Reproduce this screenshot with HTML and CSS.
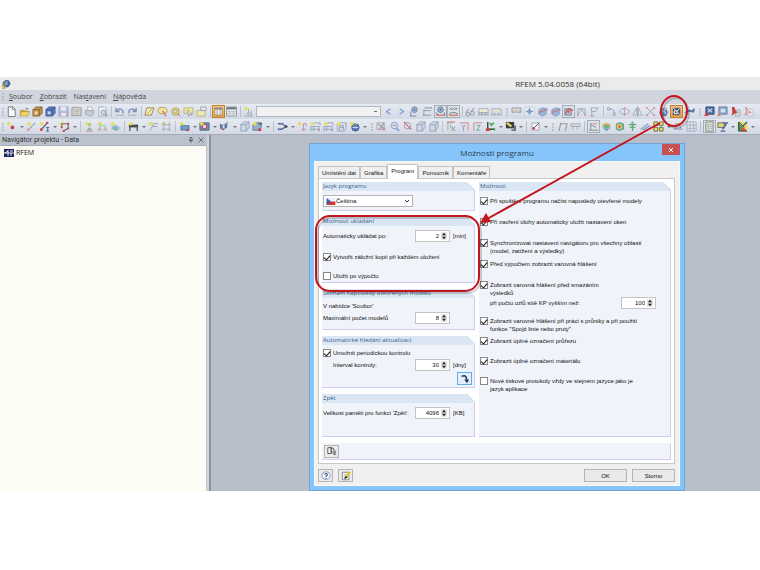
FILE: index.html
```html
<!DOCTYPE html>
<html lang="cs">
<head>
  <meta charset="UTF-8" />
  <meta name="viewport" content="width=device-width, initial-scale=1.0"/>
  <title>RFEM 5.04.0058 (64bit)</title>
  <link rel="stylesheet" href="styles.css">
</head>
<body>
  <div class="app">
    <header class="title-bar">
      <svg class="app-icon" viewBox="0 0 12 12">
        <path d="M2 4L6 1l4 1 1.500 4-3 4H6L3 8z" fill="#3d5f8c"/>
        <path d="M4 4l3-2 2 2-1 3-3 1z" fill="#7e9dc4"/>
        <path d="M4.500 6H2v2.500h2.500V11H1.500" fill="none" stroke="#b8a045" stroke-width="1.500"/>
      </svg>
      <h1>RFEM 5.04.0058 (64bit)</h1>
    </header>
    <nav class="menu-bar">
      <span class="grip"></span>
      <a href="#"><u>S</u>oubor</a>
      <a href="#"><u>Z</u>obrazit</a>
      <a href="#">Nas<u>t</u>avení</a>
      <a href="#"><u>N</u>ápověda</a>
    </nav>
    <div class="toolbar toolbar-main" id="toolbar-main"></div>
    <div class="toolbar" id="toolbar-model"></div>

    <div class="main">
      <aside class="navigator">
        <div class="navigator-header">
          <h2>Navigátor projektu - Data</h2>
          <button title="Připnout"><svg viewBox="0 0 6 6"><path d="M2 .5h2v3H2zM1 3.500h4M3 3.500V6" fill="none" stroke="#555" stroke-width=".8"/></svg></button>
          <button title="Zavřít"><svg viewBox="0 0 6 6"><path d="M.5.5l5 5M5.500.5l-5 5" stroke="#666" stroke-width=".9"/></svg></button>
        </div>
        <ul class="tree">
          <li>
            <svg viewBox="0 0 10 8"><path d="M0 0h10v8H0z" fill="#1d2462"/><path d="M0 4h10M4 1v6M4 2L1 4M7 4v3M6 2h3" stroke="#fff" stroke-width=".9"/></svg>
            RFEM
          </li>
        </ul>
      </aside>

      <main class="workspace">
        <section class="dialog">
          <div class="dialog-title">
            <h2>Možnosti programu</h2>
            <button class="close-button" title="Zavřít"><svg viewBox="0 0 6 6"><path d="M1 1l4 4M5 1L1 5" stroke="#fff"/></svg></button>
          </div>
          <div class="dialog-body">
            <div class="tabs">
              <button class="tab">Umístění dat</button>
              <button class="tab">Grafika</button>
              <button class="tab active">Program</button>
              <button class="tab">Pomocník</button>
              <button class="tab">Komentáře</button>
            </div>
            <div class="tab-panel">
              <div class="column">
                <section class="group group-language">
                  <h3>Jazyk programu</h3>
                  <div class="language">
                    <svg class="flag" viewBox="0 0 10 8"><path d="M0 0h10v4H0z" fill="#eef"/><path d="M0 4h10v4H0z" fill="#d8392f"/><path d="M0 0l5 4-5 4z" fill="#2d62b4"/></svg>
                    <select aria-label="Jazyk programu"><option>Čeština</option></select>
                    <svg class="chevron" viewBox="0 0 6 6"><path d="M1 2l2 2 2-2" fill="none" stroke="#333"/></svg>
                  </div>
                </section>

                <section class="group group-saving">
                  <h3>Možnosti ukládání</h3>
                  <div class="field">
                    <label for="autosave">Automaticky ukládat po:</label>
                    <span class="spin"><input type="number" id="autosave" value="2"><svg viewBox="0 0 8 10"><use href="#arrows"/></svg></span>
                    <span class="unit">[min]</span>
                  </div>
                  <label class="check"><input type="checkbox" checked>Vytvořit záložní kopii při každém uložení</label>
                  <label class="check"><input type="checkbox">Uložit po výpočtu</label>
                </section>

                <section class="group group-recent">
                  <h3>Seznam naposledy otevřených modelů</h3>
                  <p>V nabídce 'Soubor'</p>
                  <div class="field">
                    <label for="recent">Maximální počet modelů</label>
                    <span class="spin"><input type="number" id="recent" value="8"><svg viewBox="0 0 8 10"><use href="#arrows"/></svg></span>
                    <span class="unit"></span>
                  </div>
                </section>

                <section class="group group-updates">
                  <h3>Automatické hledání aktualizací</h3>
                  <label class="check"><input type="checkbox" checked>Umožnit periodickou kontrolu</label>
                  <div class="field indented">
                    <label for="interval">Interval kontroly:</label>
                    <span class="spin"><input type="number" id="interval" value="30"><svg viewBox="0 0 8 10"><use href="#arrows"/></svg></span>
                    <span class="unit">[dny]</span>
                  </div>
                  <button class="icon-button focused" title="Zkontrolovat nyní">
                    <svg viewBox="0 0 12 12"><path d="M2 3c3-2 6-1 6 4" fill="none" stroke="#26335e" stroke-width="1.800"/><path d="M5 6.500h6L8.500 11z" fill="#26335e"/></svg>
                  </button>
                </section>

                <section class="group group-undo">
                  <h3>Zpět</h3>
                  <div class="field">
                    <label for="undo">Velikost paměti pro funkci 'Zpět':</label>
                    <span class="spin"><input type="number" id="undo" value="4096"><svg viewBox="0 0 8 10"><use href="#arrows"/></svg></span>
                    <span class="unit">[KB]</span>
                  </div>
                </section>
              </div>

              <section class="group group-options">
                <h3>Možnosti</h3>
                <div class="check-list">
                  <label class="check"><input type="checkbox" checked>Při spuštění programu načíst naposledy otevřené modely</label>
                  <label class="check"><input type="checkbox" checked>Při zavření úlohy automaticky uložit nastavení oken</label>
                  <label class="check"><input type="checkbox" checked><span>Synchronizovat nastavení navigátoru pro všechny oblasti<br>(model, zatížení a výsledky)</span></label>
                  <label class="check"><input type="checkbox" checked>Před výpočtem zobrazit varovná hlášení</label>
                  <label class="check"><input type="checkbox" checked><span>Zobrazit varovná hlášení před smazáním<br>výsledků</span></label>
                </div>
                <div class="field node-count">
                  <label for="nodes">při počtu uzlů sítě KP vyšším než:</label>
                  <span class="spin"><input type="number" id="nodes" value="100"><svg viewBox="0 0 8 10"><use href="#arrows"/></svg></span>
                </div>
                <div class="check-list">
                  <label class="check"><input type="checkbox" checked><span>Zobrazit varovné hlášení při práci s průniky a při použití<br>funkce "Spojit linie nebo pruty"</span></label>
                  <label class="check"><input type="checkbox" checked>Zobrazit úplné označení průřezu</label>
                  <label class="check"><input type="checkbox" checked>Zobrazit úplné označení materiálu</label>
                  <label class="check"><input type="checkbox"><span>Nové tiskové protokoly vždy ve stejném jazyce jako je<br>jazyk aplikace</span></label>
                </div>
              </section>

              <div class="panel-footer">
                <button class="icon-button" title="Výchozí nastavení">
                  <svg viewBox="0 0 12 12"><path d="M1 2h4v7H1zM5 2l3 1v5L5 7z" fill="#fff" stroke="#544" stroke-width="1.100"/><path d="M7 5h4v6H7z" fill="#aaa"/><path d="M8 7h2M8 9.500h2" stroke="#444"/></svg>
                </button>
              </div>
            </div>

            <div class="dialog-buttons">
              <button class="icon-button" title="Nápověda">
                <svg viewBox="0 0 12 12"><ellipse cx="6" cy="5.500" rx="5" ry="4.500" fill="#f4f7fc" stroke="#7d8ca6"/><path d="M4.500 4.500c0-2 3.300-2 3 0C7.400 5.600 6 5.500 6 7M6 8v1.200" fill="none" stroke="#2a4490" stroke-width="1.300"/></svg>
              </button>
              <button class="icon-button" title="Upravit komentář">
                <svg viewBox="0 0 12 12"><path d="M1.500 1.500h8v9h-8z" fill="#fff" stroke="#777"/><path d="M3 4h4M3 6h2M3 8h5" stroke="#888" stroke-width=".7"/><path d="M11 1L6 7" stroke="#e3c21c" stroke-width="2.600"/><path d="M6 6L4.500 9l3-1.500" stroke="#222" fill="#222"/></svg>
              </button>
              <button class="text-button first">OK</button>
              <button class="text-button">Storno</button>
            </div>
          </div>
        </section>
      </main>
    </div>

    <svg class="annotation" viewBox="0 0 760 414">
      <g class="shadow">
        <rect x="318" y="141" width="163" height="75" rx="14"/>
        <ellipse cx="676" cy="36" rx="13" ry="15"/>
      </g>
      <g class="marks">
        <rect x="316" y="139" width="163" height="75" rx="14"/>
        <ellipse cx="674" cy="34" rx="13" ry="15"/>
        <path d="M660 46L487 142"/>
      </g>
      <path d="M480 146l6-10 5 9z" fill="#c4141c"/>
    </svg>
  </div>

  <svg width="0" height="0" class="defs">
    <symbol id="arrows" viewBox="0 0 8 10">
      <path d="M0 0h8v10H0z" fill="#e6e6e6"/>
      <path d="M0 5h8" stroke="#bbb" stroke-width=".6"/>
      <path d="M1.500 4L4 1l2.500 3zM1.500 6L4 9l2.500-3z" fill="#222"/>
    </symbol>
  </svg>
  <script src="toolbar.js"></script>
</body>
</html>
```

FILE: toolbar.js
```js
// Icon drawings, all on a 12 x 12 grid
const star = '<circle cx="3" cy="3" r="2" fill="#e8dc3c"/>';
const icons = {
  new: '<path d="M2.500 1h5l2.500 2.500V11.500h-7.500z" fill="#fff" stroke="#555" stroke-width=".9"/><path d="M7 1v3h3" fill="none" stroke="#555" stroke-width=".8"/>',
  open: '<path d="M1 4h4l1 1h4v5H1z" fill="#c79a22"/><path d="M3 6h9l-2.500 5H1z" fill="#f0cf55" stroke="#9b7a1c" stroke-width=".5"/><path d="M7 3q2-2 3 1" fill="none" stroke="#44618f"/>',
  boxOrange: '<path d="M1 4l3-3h7v7l-3 3H1z" fill="#c98428" stroke="#5e421d" stroke-width=".8"/><path d="M1 4h7v7M8 4l3-3" stroke="#5e421d" fill="none" stroke-width=".8"/><path d="M3 6h3v3H3z" fill="#f2dfb5"/>',
  boxBlue: '<path d="M1 4l3-3h7v7l-3 3H1z" fill="#3f6fc0" stroke="#1c2f63" stroke-width=".8"/><path d="M1 4h7v7M8 4l3-3" stroke="#1c2f63" fill="none" stroke-width=".8"/><path d="M3 6h3v3H3z" fill="#c4d6f3"/>',
  save: '<path d="M1 1h10v10H1z" fill="#b3b7d5" stroke="#8a8fb2" stroke-width=".8"/><path d="M3 1h6v4H3zM3.500 7.500h5V11h-5z" fill="#eceef5"/>',
  sheet: '<path d="M1 1.500h10v9H1z" fill="#d9d6ce" stroke="#8e8b86"/><path d="M1 4h10M3 6h6M3 8h6" stroke="#99958e" stroke-width=".7"/>',
  print: '<path d="M4 1h4l2 4H4z" fill="#f8f8fa" stroke="#8f96a5" stroke-width=".7"/><path d="M1.500 5h9v4l-3 2-6-2z" fill="#c3c8d2" stroke="#828a99" stroke-width=".7"/>',
  preview: '<path d="M2 1h6l2 2v8H2z" fill="#f0f2f7" stroke="#8d95a6" stroke-width=".8"/><circle cx="7" cy="7" r="2.500" fill="#cdd9ec" stroke="#8090ab"/><path d="M9 9l2.500 2" stroke="#8090ab" stroke-width="1.300"/>',
  undo: '<path d="M2 2v4h4M2.500 5.500C6 1.500 11 3.500 9.500 8" fill="none" stroke="#6d83aa" stroke-width="1.400"/><path d="M2 10h9" stroke="#9ba6b9"/>',
  redo: '<path d="M10 2v4H6M9.500 5.500C6 1.500 1 3.500 2.500 8" fill="none" stroke="#6d83aa" stroke-width="1.400"/><path d="M1 10h9" stroke="#9ba6b9"/>',
  plane: '<path d="M3 2h8l-3 8H1z" fill="#f3eeb5" stroke="#94652b" stroke-width=".9"/><path d="M3 9l6-6" stroke="#c58c2b"/>',
  lens: '<ellipse cx="6" cy="5" rx="5" ry="3.500" fill="#f2e692" stroke="#a98c35"/><path d="M6 5l4 6" stroke="#c35a4c" stroke-width="1.200"/>',
  target: '<circle cx="6" cy="6" r="4" fill="#f3dc66" stroke="#9b8540"/><circle cx="6" cy="6" r="1.500" fill="#fff" stroke="#776"/><path d="M9 9l2 2" stroke="#c33"/>',
  select: '<path d="M1 2h10v6H1z" fill="#f0e88c" stroke="#a4a06d" stroke-width=".8"/><path d="M5 4l5 6-3-1-1 2z" fill="#f7f8fb" stroke="#777" stroke-width=".7"/>',
  folder: '<path d="M1 5h9v6H1z" fill="#f1eaa7" stroke="#a79f5c" stroke-width=".8"/><path d="M5 1h6v4H5z" fill="#dfe5ef" stroke="#7d8ba1" stroke-width=".8"/>',
  columns: '<path d="M1 1h10v10H1z" fill="#f2f3f5" stroke="#777"/><path d="M1 2.500h10" stroke="#555" stroke-width="1.500"/><path d="M4 3v8M8 3v8" stroke="#888"/>',
  table: '<path d="M.5 1h11v10H.5z" fill="#e1e4e8" stroke="#777" stroke-width=".8"/><path d="M1 2.500h10" stroke="#4a5568" stroke-width="2"/><path d="M1 6h10M1 8.500h10M4 4v7M8 4v7" stroke="#b2b7bf" stroke-width=".7"/>',
  load: star + '<path d="M6 3v5M4 7l2 3 2-3M1 11h10M9 5v6" fill="none" stroke="#8b97ad" stroke-width=".9"/>',
  left: '<path d="M8 3L4 6l4 3" fill="none" stroke="#6f93d6" stroke-width="1.500"/>',
  right: '<path d="M4 3l4 3-4 3" fill="none" stroke="#6f93d6" stroke-width="1.500"/>',
  eye: '<circle cx="6" cy="4" r="3" fill="#a5bddf" stroke="#4d6388"/><circle cx="6" cy="4" r="1" fill="#253f70"/><path d="M2 6v5M1 11h7" stroke="#778"/>',
  values: '<path d="M3 1l2 2M5 1L3 3M6 1l2 2M8 1L6 3M9 1l2 2M11 1L9 3M2 4v7M1 10h9M2 5h8" stroke="#6a7386" fill="none" stroke-width=".8"/>',
  eyeRed: '<circle cx="6" cy="4" r="3" fill="#a5bddf" stroke="#3d5c8e"/><circle cx="6" cy="4" r="1" fill="#253f70"/><path d="M1 10h10" stroke="#d0493f" stroke-width="1.200"/><path d="M1 7l3 3M10 7l1 3" stroke="#456"/>',
  valuesRed: '<path d="M2 2l2 2M4 2L2 4M5 2l2 2M7 2L5 4M8 2l2 2M10 2L8 4" stroke="#555" stroke-width=".8"/><path d="M1 9q5-4 10 0" fill="none" stroke="#567"/><path d="M1 10h10" stroke="#d0493f" stroke-width="1.200"/>',
  glasses: '<path d="M1 9a2 2 0 104 0 2 2 0 10-4 0M6 8a2 2 0 104 0 2 2 0 10-4 0M1 8l3-5M6 7l4-5" fill="none" stroke="#8b94a5" stroke-width="1.100"/>',
  calc: '<path d="M1 3h10v4H1z" fill="#f6f2d3" stroke="#8790a1" stroke-width=".8"/><path d="M1 11V7M4 11V7M8 11V7M11 11V7M1 9h10" stroke="#7d899e" stroke-width=".8"/>',
  mesh: '<path d="M1 3h10M1 9h10M1 3v8M4 3v8M8 3v8M11 3v8" stroke="#9097a5" stroke-width=".8"/><path d="M2 4h8v3H2z" fill="#e9e4c3"/>',
  hatch: '<path d="M1 2h10v5H1z" fill="#b5b2a8" stroke="#8b8e96" stroke-width=".8"/><path d="M1 4h10M4 2v5M8 2v5M2 10l7-6" stroke="#e6e3d9" stroke-width=".8"/>',
  grid: '<path d="M1 1h10v10H1z" fill="#e6ecf5" stroke="#a4b3cc" stroke-width=".7" stroke-dasharray="1.500 1"/><path d="M6 2v8M2 6h8" stroke="#5579b5" stroke-width=".8"/><circle cx="6" cy="6" r="2" fill="none" stroke="#5579b5"/>',
  solid: '<path d="M2 4l4-2 5 1-1 6-4 2-4-2z" fill="#8dafd9" stroke="#6683ac" stroke-width=".7"/><path d="M2 7l8-3" stroke="#d3544b" stroke-width="1.200"/>',
  solidRed: '<path d="M2 3h7v7H2z" fill="#a8b8cf" stroke="#43628f" stroke-width=".8"/><path d="M2 9l4-6 5 2" fill="none" stroke="#c9433a" stroke-width="1.300"/><circle cx="6" cy="6" r="1.500" fill="#d45"/>',
  frameRed: '<path d="M2 10V3h8v7M2 10l4-7 4 7" fill="none" stroke="#8e96a6" stroke-width=".9"/><circle cx="2" cy="10" r="1" fill="#d88"/><circle cx="10" cy="10" r="1" fill="#d88"/>',
  support: '<path d="M2 2h8L7 6H3zM3 6v5M1 11h5" fill="none" stroke="#8893a8" stroke-width=".9"/>',
  copy: '<circle cx="3" cy="3" r="1.500" fill="none" stroke="#8a93a5"/><path d="M4 4q5-2 5 4" fill="none" stroke="#8a93a5"/><circle cx="9" cy="9" r="1.500" fill="none" stroke="#8a93a5"/>',
  rotate: '<ellipse cx="6" cy="6" rx="5" ry="3" fill="none" stroke="#7ea0cf"/><path d="M6 1v10" stroke="#d98480"/>',
  mirror: '<path d="M5 2v8H1zM7 2v8h4z" fill="#e9ecf2" stroke="#8690a3" stroke-width=".8"/><path d="M6 0v12" stroke="#8690a3" stroke-width=".6"/>',
  cross: '<path d="M2 2l8 8M10 2l-8 8" stroke="#8a8f9d" stroke-width=".9"/><path d="M1 1h2v2H1zM9 1h2v2H9zM1 9h2v2H1zM9 9h2v2H9z" fill="#dc8580"/>',
  globe: '<circle cx="6" cy="7" r="4" fill="#5d82b8" stroke="#2f4a76"/><circle cx="8" cy="3" r="2" fill="#9fb4d3"/><path d="M3 6q3-2 6 2" fill="none" stroke="#d9e4f3"/>',
  options: '<path d="M1 1h10v10H1z" fill="#2b457d"/><circle cx="5" cy="7" r="3" fill="#dfe6f3"/><circle cx="5" cy="7" r="1.200" fill="#27407a"/><path d="M7 5l3-3M8 8l2 2M2 2l2 1" stroke="#fff" fill="none" stroke-width="1.300"/>',
  wrench: '<path d="M1 8l4-3 5 1 1-3" fill="none" stroke="#46628f" stroke-width="2.200"/><circle cx="3" cy="8" r="2" fill="#8fa6c9"/>',
  screenBlue: '<path d="M2 1h9v8H2z" fill="#2d578f" stroke="#213d67"/><path d="M4 3l5 4M9 3L4 7" stroke="#cfe1f5" stroke-width="1.200"/><path d="M0 11l3-5 2 5z" fill="#cc2a25"/>',
  screenPale: '<path d="M2 1h9v8H2z" fill="#7f9cc4" stroke="#5f7799"/><path d="M4 3h5v4H4z" fill="#d4e1f0"/><path d="M0 11l3-4 1 4z" fill="#cf6d69"/>',
  pdf: '<path d="M6 4h5v7H6z" fill="#ced2da" stroke="#9297a3" stroke-width=".7"/><path d="M2 1h3q0 4 4 6-4 0-7 4 1-5 0-10z" fill="#c4211e"/>',
  pdfPale: '<path d="M5 3h4l2 2v6H5z" fill="#e8eaef" stroke="#a9aeb9" stroke-width=".7"/><path d="M3 1q1 5 6 6-4 0-7 3 3-4 1-9z" fill="#f3d3d2" stroke="#d8716d" stroke-width=".9"/>',
  node: star + '<circle cx="7" cy="7" r="2" fill="#cf2420"/>',
  line: star + '<path d="M2 10l8-8" stroke="#999" stroke-width="1.200"/><circle cx="2.500" cy="9.500" r="1.300" fill="#d98682"/>',
  lineRed: star + '<path d="M2 10l7-8" stroke="#444" stroke-width="1.400"/><circle cx="2.500" cy="9.500" r="1.500" fill="#cf2420"/><circle cx="9" cy="2" r="1.300" fill="#cf2420"/><path d="M8 7h3M9.500 7v4M8 11h3" stroke="#23418a"/>',
  polyline: star + '<path d="M3 3h7v5L5 11M3 3v4" fill="none" stroke="#555" stroke-width="1.200"/><path d="M9 2h2v2H9zM2 6h2v2H2zM9 7h2v2H9zM4 10h2v2H4z" fill="#cf2420"/>',
  person: star + '<circle cx="6" cy="4" r="2" fill="#a9c48f"/><path d="M3 10q3-6 6 0z" fill="#7fb295"/><path d="M2 11h8" stroke="#b77"/>',
  supports: star + '<path d="M2 5h8" stroke="#8d9" stroke-width="1.200"/><path d="M3 6L1 10h4zM9 6l-2 4h4z" fill="#9fc6a5" stroke="#d28f8c" stroke-width=".5"/>',
  layers: star + '<path d="M1 6l5-2 5 3-5 2z" fill="#8bb5d8"/><path d="M1 8l5-2 5 3-5 2z" fill="#74b5a4"/>',
  dimension: '<path d="M1 4h10v3H1z" fill="#333"/><path d="M2 4v7M10 4v7" stroke="#333" stroke-width="1.300"/>' + star,
  comment: star + '<path d="M2 11l4-8h5M5 6h5" fill="none" stroke="#8f97a6"/>',
  axes: star + '<path d="M3 1v10M9 1v10M1 4h10M1 9h10" stroke="#989fad" stroke-width=".9"/>',
  surface: '<path d="M2 5h9v5H2z" fill="#5a93c4" stroke="#274b73" stroke-width=".7"/><path d="M8 9h3v2H8z" fill="#cf2420"/>' + star,
  opening: '<path d="M1 2h10v8H1z" fill="#5d7fa6" stroke="#3a5374"/><path d="M4 4h4v4H4z" fill="#f3f5f8" stroke="#cf2420"/>' + star,
  member: '<path d="M1 3l3 1v6L1 8zM6 4l3-2v5L6 9z" fill="#47688f"/><path d="M4 5l6-4" stroke="#7d8ba3"/><circle cx="5" cy="9" r="1" fill="#cf2420"/>',
  cube: '<path d="M2 4l3-3h6v6l-3 4H2z" fill="#cbd6e6" stroke="#7b8ca6" stroke-width=".8"/><path d="M2 4h6v7M8 4l3-3" fill="none" stroke="#7b8ca6" stroke-width=".8"/>',
  cubeRed: '<path d="M1 4l3-2h6v5l-2 3H1z" fill="#87a9cb" stroke="#3d526f" stroke-width=".8"/>' + star + '<path d="M7 8h3v3H7z" fill="#cf2420"/><path d="M7 2h4v2H7z" fill="#454"/>',
  connect: '<path d="M1 3h4l5 3-5 3H1" fill="none" stroke="#39506f" stroke-width="1.400"/><circle cx="6" cy="3" r="1.300" fill="#5c83bd"/><circle cx="10" cy="6" r="1.500" fill="#234"/><circle cx="2" cy="9" r="1.300" fill="#5c83bd"/>',
  arrowDown: star + '<path d="M7 3v7M5 8l2 3 2-3M7 3h3v3" fill="none" stroke="#b3858b"/>',
  frameLoad: star + '<path d="M1 11V6h9v5M4 6v5M1 9h9M5 2h6v3" fill="none" stroke="#7e92b5" stroke-width=".9"/><circle cx="10" cy="10" r="1" fill="#d77"/>',
  frame: '<path d="M1 4l4-2h6v6l-2 3H2z" fill="#dbe1ec" stroke="#8592ab" stroke-width=".9"/><path d="M4 10V5h4v5M4 7h4" fill="none" stroke="#8592ab"/>' + star,
  bag: '<circle cx="7" cy="7" r="4" fill="#4875ad" stroke="#24446f"/><path d="M4 7h6M7 4l3-3" stroke="#dce8f6"/>' + star,
  pick: '<path d="M1 2h8v7H1z" fill="none" stroke="#8f949f" stroke-width=".8"/><path d="M2 3l8 6M9 2L3 10" stroke="#99918c" stroke-width="1.300"/><path d="M6 6l5 4H7z" fill="#b89"/>',
  zoom: '<circle cx="6" cy="5" r="3.500" fill="#d7e3f4" stroke="#6d8cbe"/><path d="M8 8l3 3" stroke="#6d8cbe" stroke-width="1.500"/><path d="M4 5h4" stroke="#c66"/>',
  zoomRed: '<circle cx="6" cy="5" r="3.500" fill="#e8e3ee" stroke="#7d8ca9"/><path d="M2 1l8 8" stroke="#cb625e" stroke-width="1.400"/>',
  viewX: '<path d="M1 2h7M2 2v8M5 4v4" stroke="#94a399"/><path d="M1 1h9" stroke="#ce6c67"/><path d="M6 6l4 5M10 6l-4 5" stroke="#519a68"/>',
  viewY: '<path d="M1 2h9v8" fill="none" stroke="#cf7672"/><path d="M3 4l2 3 2-3M5 7v4" fill="none" stroke="#7b82c2"/>',
  viewZ: '<path d="M2 11V2h9" fill="none" stroke="#cf7672"/><path d="M5 5h4l-4 5h4" fill="none" stroke="#5aa06f"/>',
  axisRed: '<path d="M3 1v8h8" fill="none" stroke="#222" stroke-width="1.500"/><path d="M5 2l3 3M8 8l3 2M6 5l4-3" stroke="#2e9a44" stroke-width="1.500"/><path d="M1 8h4v3H1z" fill="#cf2420"/>',
  render: '<path d="M1 1h9v7H1z" fill="#232323"/><path d="M2 2l5 4" stroke="#e8dc3c" stroke-width="2.400"/><path d="M7 10h4V5" fill="none" stroke="#333" stroke-width="1.500"/>',
  check: '<path d="M2 2h8v8H2z" fill="#f5f6f9" stroke="#889" stroke-width=".8"/><path d="M4 8l6-6" stroke="#333"/><circle cx="4" cy="8" r="1.500" fill="#cf2420"/>',
  portal: '<path d="M2 11l2-8h7l-2 8" fill="none" stroke="#7d9590" stroke-width="1.200"/><circle cx="4" cy="3" r="1" fill="#d77"/>',
  beam: '<path d="M1 3h10v3H1zM3 6v3M8 6v3" fill="#d8dbe2" stroke="#8790a2" stroke-width=".8"/>',
  result: '<path d="M1 10h10M3 10V2M3 4l6 3" fill="none" stroke="#667489"/><path d="M5 3h5" stroke="#c77"/>',
  rainbow: '<path d="M1 4l5-2 5 2-5 3z" fill="#d9a544"/><path d="M1 6l5-2 5 2-5 3z" fill="#59ad6b"/><path d="M1 7l5 2 5-2-5 4z" fill="#5684c5"/>',
  contour: '<path d="M2 3l4-2 5 2v6l-5 2-4-2z" fill="#50a084"/><circle cx="6" cy="6" r="3" fill="#e3c94f"/><circle cx="6" cy="6" r="1.500" fill="#c94b42"/>',
  tree: '<path d="M6 2v9M2 4h8M3 7h6" stroke="#4e9d5b" stroke-width="1.400"/><circle cx="6" cy="2" r="1.500" fill="#6ab37a"/>',
  slope: '<path d="M1 9l8-6M3 10l8-5" stroke="#7494c4" stroke-width="1.400"/>',
  tiles: '<path d="M1 1h4v4H1zM7 1h4v4H7zM1 7h4v4H1zM7 7h4v4H7z" fill="#f0df42" stroke="#4b4a27" stroke-width=".9"/>',
  section: '<path d="M1 9h10M3 9V5h5v4" fill="none" stroke="#7f91b5" stroke-width=".9"/><path d="M2 3h8" stroke="#cc8080"/>',
  matrix: '<path d="M1 1h10v10H1zM1 4.500h10M1 8h10M4.500 1v10M8 1v10" fill="#e5eaf3" stroke="#8a98b4" stroke-width=".8"/>',
  panel: '<path d="M2 1h8v10H2z" fill="#dfe3de" stroke="#6c756f"/><path d="M4 3h1v6H4z" fill="#6fa777"/><path d="M6 4h3M6 6h3M6 8h3" stroke="#889" stroke-width=".7"/>',
  display: '<path d="M1 2h7v5H1z" fill="#e3d86a" stroke="#333" stroke-width=".8"/><path d="M6 2h5L6 9M4 11h5" fill="none" stroke="#36507d" stroke-width="1.500"/>',
  colors: '<path d="M1 1h10v10H1z" fill="#f0e03a"/><path d="M1 1l5 5v5H1z" fill="#2f9a3e"/><path d="M6 6l5 5H4z" fill="#d8332a"/><path d="M2 1v10h9M2 1l6 6" fill="none" stroke="#222"/><path d="M11 1L6 6" stroke="#23418a" stroke-width="1.500"/>'
};

// "|" separator, ":" grip, "v" drop-down arrow, "+" pressed button, "*" highlighted button
const mainTools = ': new open boxOrange boxBlue save sheet print preview | undo redo | plane lens target select folder | *columns table | load combo left right eye values +eyeRed +valuesRed | glasses calc mesh : hatch grid solid solid +solidRed frameRed support | copy rotate mirror cross globe *options wrench : screenBlue screenPale pdf pdfPale';
const modelTools = ': node v line lineRed v polyline v | person supports layers | dimension v comment axes | surface v opening v member v cube cubeRed v | connect v arrowDown frameLoad frameLoad frame bag v : pick zoom zoomRed cube cube | viewX viewY viewZ axisRed v render v | check v : portal beam | +result rainbow contour tree slope tiles v section matrix | +panel display v colors v';

function renderTool(tool) {
  if (tool === '|') return '<span class="separator"></span>';
  if (tool === ':') return '<span class="grip"></span>';
  if (tool === 'v') return '<button class="drop" title="Více"></button>';
  if (tool === 'combo') return '<select class="case-select" aria-label="Zatěžovací stav"><option></option></select>';
  let state = '';
  if (tool[0] === '+') state = ' pressed';
  if (tool[0] === '*') state = ' highlighted';
  const name = tool.replace(/^[+*]/, '');
  return `<button class="tool${state}" title="${name}"><svg viewBox="0 0 12 12">${icons[name]}</svg></button>`;
}

document.getElementById('toolbar-main').innerHTML = mainTools.split(' ').map(renderTool).join('');
document.getElementById('toolbar-model').innerHTML = modelTools.split(' ').map(renderTool).join('');
```

FILE: styles.css
```css
* {
  box-sizing: border-box;
}
body {
  margin: 0;
  background: #fff;
  color: #111;
  font-family: 'Liberation Sans', Arial, sans-serif;
  font-size: 6px;
  line-height: 8px;
}
h1, h2, h3, p, ul {
  margin: 0;
  padding: 0;
  font-weight: normal;
}
button, input, select {
  font: inherit;
  color: inherit;
  margin: 0;
  padding: 0;
}
svg {
  display: block;
}
.defs {
  position: absolute;
}
.app {
  position: relative;
  margin-top: 77px;
  overflow: hidden;
  background: #d0d4dd;
}

/* window title and menu */
.title-bar {
  display: flex;
  align-items: center;
  height: 13px;
  padding-left: 1px;
  background: #ebebeb;
}
.app-icon {
  width: 10px;
  height: 10px;
}
.title-bar h1 {
  flex: 1;
  padding-left: 344px;
  text-align: center;
  font: 8px/12px 'Open Sans', sans-serif;
  color: #333;
}
.menu-bar {
  display: flex;
  align-items: center;
  height: 14px;
  gap: 7px;
  font: 7px/12px 'Open Sans', sans-serif;
}
.menu-bar .grip {
  margin-right: -3px;
}
.menu-bar a {
  color: #444;
  text-decoration: none;
}

/* toolbars */
.toolbar {
  display: flex;
  align-items: center;
  height: 15px;
  overflow: hidden;
  background: linear-gradient(#e6eaf2, #d3d9e5);
}
.grip {
  flex: none;
  width: 7px;
  height: 10px;
  background: radial-gradient(circle, #9aa1b0 30%, transparent 50%) center / 2px 3px repeat-y;
}
.grip:first-child {
  width: 5px;
}
.separator {
  flex: none;
  width: 5px;
  height: 11px;
  background: linear-gradient(#b9c0ce, #b9c0ce) center / 1px 100% no-repeat;
}
.toolbar-main .separator {
  width: 4px;
}
.tool {
  flex: none;
  display: flex;
  align-items: center;
  justify-content: center;
  width: 13px;
  height: 13px;
  border: 1px solid transparent;
  background: none;
}
.tool svg {
  flex: none;
  width: 11px;
  height: 11px;
  opacity: 0.85;
}
.tool.pressed {
  border-color: #a3aeb5;
  background: #dce3e6;
}
.tool.highlighted {
  border-color: #b98238;
  background: linear-gradient(#f7c987, #f2a13c);
}
.tool.highlighted svg {
  width: 9px;
  height: 9px;
}
.drop {
  flex: none;
  display: flex;
  align-items: center;
  justify-content: center;
  width: 7px;
  height: 13px;
  border: none;
  background: none;
}
.drop::after {
  content: '';
  border: 2px solid transparent;
  border-top-color: #777;
  border-bottom: none;
}
.case-select {
  flex: none;
  width: 125px;
  height: 11px;
  margin: 0 1px;
  border: 1px solid #b3b8c3;
  appearance: none;
  background: linear-gradient(#777, #777) right 3px center / 3px 1px no-repeat, #f1f1f2;
}

/* navigator */
.main {
  display: flex;
  border-top: 1px solid #a5abb7;
}
.navigator {
  display: flex;
  flex-direction: column;
  width: 207px;
  margin-right: 2px;
  border-right: 1px solid #bfc3cb;
  background: #fcfcf4;
}
.navigator-header {
  display: flex;
  align-items: center;
  height: 11px;
  padding: 0 2px;
  gap: 4px;
  background: #bcc2cd;
  border-bottom: 1px solid #a9afb9;
}
.navigator-header h2 {
  flex: 1;
  font: 7px/10px Roboto, sans-serif;
  color: #333;
}
.navigator-header button {
  border: none;
  background: none;
}
.navigator-header svg {
  width: 6px;
  height: 6px;
}
.tree {
  list-style: none;
  padding: 2px 4px;
}
.tree li {
  display: flex;
  align-items: center;
  gap: 2px;
  font: 7px/9px 'Open Sans', sans-serif;
}
.tree svg {
  width: 10px;
  height: 8px;
}

/* workspace and dialog */
.workspace {
  flex: 1;
  padding: 8px 75px 0 98px;
  border-left: 2px solid #8c929e;
  background: #b8bec9;
}
.dialog {
  padding: 0 4px 4px;
  border: 1px solid #6fa5d6;
  background: #86c5fb;
}
.dialog-title {
  display: flex;
  align-items: flex-start;
  height: 17px;
}
.dialog-title h2 {
  flex: 1;
  padding-left: 18px;
  text-align: center;
  font: 8px/17px 'Open Sans', sans-serif;
  color: #2c3e50;
}
.close-button {
  display: flex;
  align-items: center;
  justify-content: center;
  width: 18px;
  height: 11px;
  border: none;
  background: #c75050;
}
.close-button svg {
  width: 6px;
  height: 6px;
}
.dialog-body {
  padding: 2px 4px 3px 3px;
  border: 1px solid #f8f8f8;
  background: #f0f0f0;
}
.tabs {
  display: flex;
  align-items: flex-end;
  height: 14px;
}
.tab {
  height: 12px;
  padding: 0 3px;
  border: 1px solid #c4c4c4;
  border-bottom: none;
  background: #f0f0f0;
}
.tab.active {
  height: 15px;
  margin-bottom: -1px;
  padding-bottom: 2px;
  background: #fff;
}
.tab-panel {
  display: grid;
  grid-template-columns: 153px 1fr;
  gap: 6px 4px;
  padding: 3px;
  border: 1px solid #c8c8c8;
  background: #fff;
}
.column {
  display: flex;
  flex-direction: column;
  gap: 6px;
}
.group {
  display: flex;
  flex-direction: column;
  border-right: 1px solid #ccccf0;
  border-bottom: 1px solid #ccccf0;
  background: #f0f4fa;
}
.group h3 {
  height: 9px;
  margin: 0 -1px 4px 0;
  padding-left: 1px;
  background: linear-gradient(225deg, #fff 5px, #dbe6f4 5px);
  font: 6px/9px 'Open Sans', sans-serif;
  color: #355d88;
}
.group p {
  padding: 0 1px;
}
.group-language {
  min-height: 29px;
}
.group-saving {
  min-height: 66px;
}
.group-recent {
  min-height: 41px;
}
.group-updates {
  min-height: 52px;
}
.group-undo {
  flex: 1;
  min-height: 43px;
}
.field {
  display: flex;
  align-items: center;
  padding-left: 1px;
}
.field label {
  flex: 1;
  white-space: nowrap;
}
.field.indented {
  padding-left: 11px;
}
.unit {
  width: 24px;
  padding-left: 3px;
}
.group-saving .check {
  margin-top: 11px;
}
.group-recent .field,
.group-updates .field {
  margin-top: 2px;
}
.spin {
  display: flex;
  width: 35px;
  height: 12px;
  padding: 1px;
  border: 1px solid #c3c3c3;
  background: #fff;
}
.spin input {
  flex: 1;
  min-width: 0;
  padding-right: 1px;
  border: none;
  outline: none;
  background: none;
  text-align: right;
  appearance: textfield;
}
.spin input::-webkit-inner-spin-button {
  display: none;
}
.spin svg {
  width: 8px;
  height: 8px;
}
.language {
  display: flex;
  align-items: center;
  width: 90px;
  height: 12px;
  margin-left: 1px;
  padding: 0 2px;
  border: 1px solid #b5b5b5;
  background: #fff;
}
.language select {
  flex: 1;
  border: none;
  appearance: none;
  background: none;
}
.flag {
  width: 10px;
  height: 7px;
}
.chevron {
  width: 6px;
  height: 6px;
}
.check {
  display: flex;
  align-items: flex-start;
  gap: 2px;
  padding-left: 1px;
  white-space: nowrap;
}
.check input {
  flex: none;
  display: flex;
  justify-content: center;
  width: 8px;
  height: 8px;
  appearance: none;
  border: 1px solid #888;
  background: #fff;
}
.check input:checked::after {
  content: '';
  width: 3px;
  height: 5px;
  border: solid #111;
  border-width: 0 1px 1px 0;
  transform: rotate(40deg);
}
.check-list {
  display: flex;
  flex-direction: column;
  gap: 4px;
}
.check-list .check {
  min-height: 16px;
}
.group-options h3 {
  margin-bottom: 6px;
}
.check-list:first-of-type {
  gap: 5px;
}
.field.node-count {
  margin-bottom: 8px;
  padding: 0 14px 0 11px;
}
.icon-button {
  display: flex;
  align-items: center;
  justify-content: center;
  width: 15px;
  height: 13px;
  border: 1px solid #b4b4b4;
  background: #ececec;
}
.icon-button svg {
  width: 10px;
  height: 10px;
}
.icon-button.focused {
  align-self: flex-end;
  margin: 1px 2px 0 0;
  border-color: #5fb0ea;
  background: #e3f0fa;
}
.panel-footer {
  grid-column: 1 / -1;
  display: flex;
  align-items: center;
  height: 17px;
  padding-left: 2px;
  border: solid #ccccf0;
  border-width: 0 1px 1px 0;
  background: #f0f4fa;
}
.dialog-buttons {
  display: flex;
  gap: 5px;
  padding-top: 5px;
}
.text-button {
  width: 43px;
  height: 13px;
  border: 1px solid #b4b4b4;
  background: #e9e9e9;
}
.text-button.first {
  margin-left: auto;
}

/* red marks over the window */
.annotation {
  position: absolute;
  top: 0;
  left: 0;
  width: 760px;
  height: 414px;
  pointer-events: none;
}
.marks {
  fill: none;
  stroke: #c4141c;
  stroke-width: 2;
}
.shadow {
  fill: none;
  stroke: rgba(0, 0, 0, 0.18);
  stroke-width: 2;
}
```
